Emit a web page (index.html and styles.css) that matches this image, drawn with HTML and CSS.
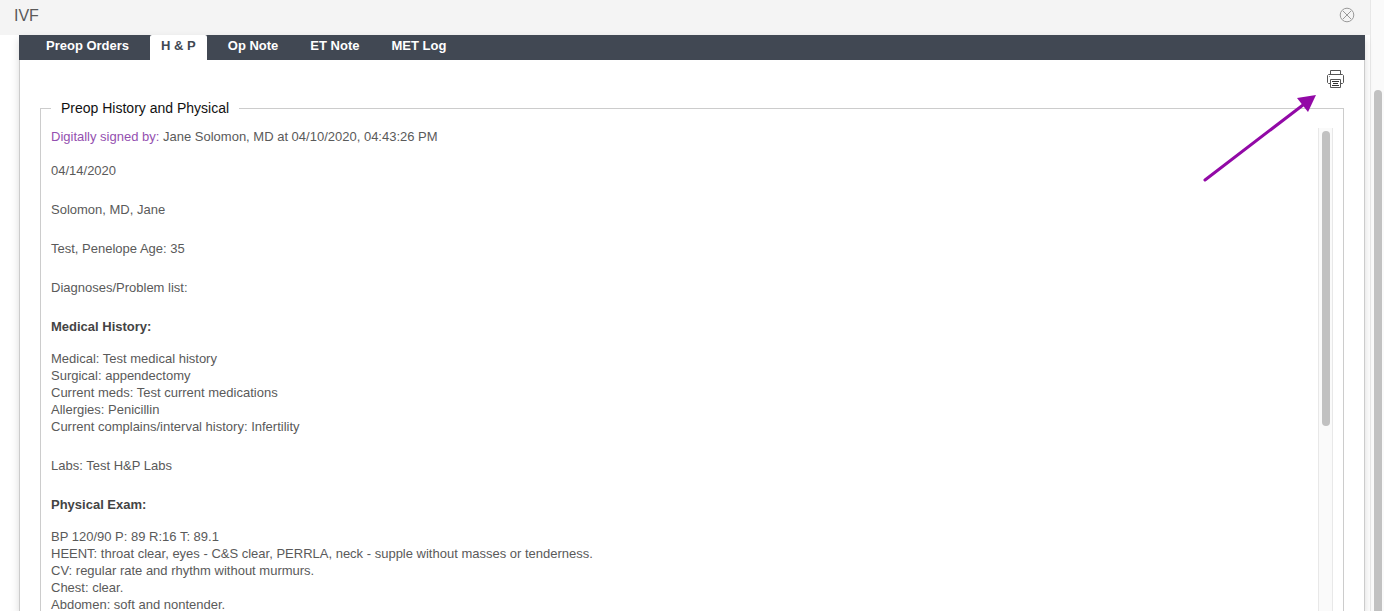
FILE: index.html
```html
<!DOCTYPE html>
<html lang="en">
<head>
    <meta charset="UTF-8">
    <meta name="viewport" content="width=device-width, initial-scale=1.0">
    <title>IVF</title>
    <link rel="stylesheet" href="styles.css">
</head>
<body>
    <div class="window">
        <header class="window-header">
            <h1>IVF</h1>
            <button class="icon-button close-button" type="button" aria-label="Close">
                <svg width="16" height="16" viewBox="0 0 16 16" fill="none" stroke="#999">
                    <circle cx="8" cy="8" r="6.8"/>
                    <path d="M4 4l8 8M12 4l-8 8"/>
                </svg>
            </button>
        </header>

        <main class="panel">
            <nav class="tabs">
                <a class="tab" href="#preop-orders">Preop Orders</a>
                <a class="tab active" href="#hp">H &amp; P</a>
                <a class="tab" href="#op-note">Op Note</a>
                <a class="tab" href="#et-note">ET Note</a>
                <a class="tab" href="#met-log">MET Log</a>
            </nav>

            <div class="toolbar">
                <button class="icon-button" type="button" aria-label="Print">
                    <svg width="18" height="18" viewBox="0 0 18 18" fill="none" stroke="#555">
                        <path d="M3.5 4.5v-4h10v4"/>
                        <path d="M3.5 13.5h-2l-1-1v-7l1-1h14l1 1v7l-1 1h-2"/>
                        <path d="M2 6.5h1" stroke="#999"/>
                        <path d="M3.5 9.5h10v8h-10z" fill="#fff"/>
                        <path d="M5 11.5h7M6 13.5h5M5 15.5h7" stroke="#333"/>
                    </svg>
                </button>
            </div>

            <fieldset class="record">
                <legend>Preop History and Physical</legend>
                <div class="record-body">
                    <div class="note">
                        <p class="signature"><span class="signed">Digitally signed by:</span> Jane Solomon, MD at 04/10/2020, 04:43:26 PM</p>
                        <p>04/14/2020</p>
                        <p>Solomon, MD, Jane</p>
                        <p>Test, Penelope Age: 35</p>
                        <p>Diagnoses/Problem list:</p>
                        <h2>Medical History:</h2>
                        <p>
                            Medical: Test medical history<br>
                            Surgical: appendectomy<br>
                            Current meds: Test current medications<br>
                            Allergies: Penicillin<br>
                            Current complains/interval history: Infertility
                        </p>
                        <p>Labs: Test H&amp;P Labs</p>
                        <h2>Physical Exam:</h2>
                        <p>
                            BP 120/90 P: 89 R:16 T: 89.1<br>
                            HEENT: throat clear, eyes - C&amp;S clear, PERRLA, neck - supple without masses or tenderness.<br>
                            CV: regular rate and rhythm without murmurs.<br>
                            Chest: clear.<br>
                            Abdomen: soft and nontender.
                        </p>
                    </div>
                    <div class="scrollbar" aria-hidden="true">
                        <div class="thumb"></div>
                    </div>
                </div>
            </fieldset>

            <svg class="pointer" width="114" height="90" viewBox="0 0 114 90" aria-hidden="true">
                <path d="M3 86L101 11" stroke="#9209a6" stroke-width="3" stroke-linecap="round"/>
                <path d="M114 1L106 18L95 4z" fill="#9209a6"/>
            </svg>
        </main>
    </div>

    <div class="scrollbar page-scrollbar" aria-hidden="true">
        <div class="thumb"></div>
    </div>
</body>
</html>
```
FILE: styles.css
```css
:root {
    --bar-color: #414853;
    --border-color: #ccc;
    --text-color: #5a5a5a;
    --signed-color: #9450b0;
}

* {
    margin: 0;
    padding: 0;
    box-sizing: border-box;
}

body {
    display: flex;
    height: 100vh;
    overflow: hidden;
    background: white;
    color: var(--text-color);
    font-family: "Helvetica Neue", "Liberation Sans", Arial, sans-serif;
    font-size: 13px;
    font-weight: 300;
    line-height: 17px;
}

.window {
    flex: 1;
    min-width: 0;
    display: flex;
    flex-direction: column;
}

.window-header {
    display: flex;
    justify-content: space-between;
    align-items: center;
    height: 35px;
    padding: 0 15px 5px 14px;
    background: #f4f4f4;
}

h1 {
    font-size: 16px;
    font-weight: 300;
}

.icon-button {
    display: block;
    border: none;
    background: none;
    cursor: pointer;
}

.icon-button svg {
    display: block;
}

.panel {
    position: relative;
    flex: 1;
    min-height: 0;
    display: flex;
    flex-direction: column;
    margin: 0 5px 0 19px;
    border: 1px solid var(--border-color);
    border-width: 0 1px;
    box-shadow: 0 4px 8px rgba(0, 0, 0, 0.15);
}

.tabs {
    display: flex;
    gap: 10px;
    margin: 0 -1px;
    padding: 0 16px;
    background: var(--bar-color);
}

.tab {
    padding: 2px 11px 6px;
    color: white;
    font-weight: bold;
    text-decoration: none;
}

.tab.active {
    background: white;
    border-radius: 2px 2px 0 0;
    color: var(--bar-color);
}

.toolbar {
    display: flex;
    justify-content: flex-end;
    padding: 10px 19px 12px;
}

.record {
    flex: 1;
    min-width: 0;
    margin: 0 20px;
    padding: 11px 10px 0;
    border: 1px solid var(--border-color);
    border-bottom: none;
}

legend {
    padding: 0 10px;
    color: #111;
    font-size: 14px;
}

.record-body {
    display: flex;
    height: 100%;
}

.note {
    flex: 1;
}

.note p {
    margin-bottom: 22px;
}

.note .signature {
    margin-bottom: 17px;
}

.signed {
    color: var(--signed-color);
}

h2 {
    margin-bottom: 15px;
    color: #444;
    font-size: 13px;
    font-weight: bold;
}

.scrollbar {
    width: 15px;
    padding: 3px;
    border: 1px solid #e8e8e8;
    border-width: 0 1px;
    background: #fafafa;
}

.thumb {
    width: 8px;
    height: 295px;
    border-radius: 4px;
    background: #c1c1c1;
}

.page-scrollbar {
    width: 14px;
    padding: 90px 0 0 3px;
    border-right: none;
}

.page-scrollbar .thumb {
    height: 100%;
    border-radius: 4px 4px 0 0;
}

.pointer {
    position: absolute;
    top: 59px;
    right: 48px;
}
```
